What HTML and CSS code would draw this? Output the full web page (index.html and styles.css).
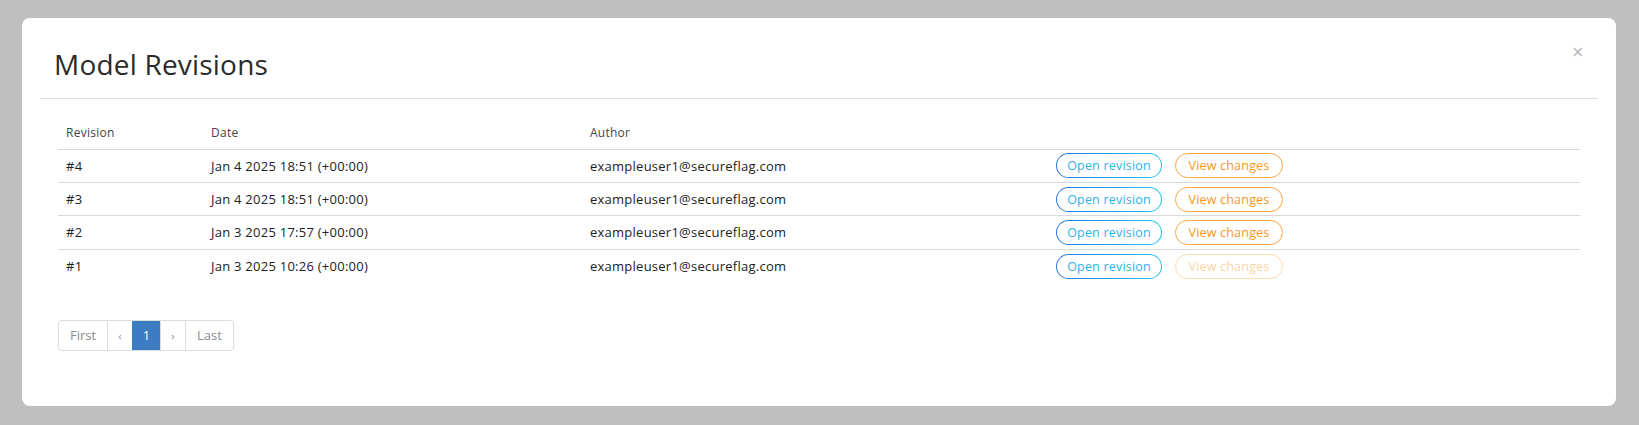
FILE: index.html
```html
<!DOCTYPE html>
<html lang="en">
<head>
<meta charset="utf-8">
<title>Model Revisions</title>
<link rel="stylesheet" href="styles.css">
</head>
<body>
<div class="backdrop">
  <div class="modal">
    <button class="close" aria-label="Close">×</button>
    <div class="modal-header">
      <h2 class="modal-title">Model Revisions</h2>
    </div>
    <div class="modal-body">
      <table class="rev-table">
        <thead>
          <tr>
            <th class="col-rev">Revision</th>
            <th class="col-date">Date</th>
            <th class="col-author">Author</th>
            <th class="col-actions"></th>
          </tr>
        </thead>
        <tbody>
          <tr>
            <td>#4</td>
            <td>Jan 4 2025 18:51 (+00:00)</td>
            <td>exampleuser1@secureflag.com</td>
            <td class="actions"><button class="btn btn-open">Open revision</button><button class="btn btn-changes">View changes</button></td>
          </tr>
          <tr>
            <td>#3</td>
            <td>Jan 4 2025 18:51 (+00:00)</td>
            <td>exampleuser1@secureflag.com</td>
            <td class="actions"><button class="btn btn-open">Open revision</button><button class="btn btn-changes">View changes</button></td>
          </tr>
          <tr>
            <td>#2</td>
            <td>Jan 3 2025 17:57 (+00:00)</td>
            <td>exampleuser1@secureflag.com</td>
            <td class="actions"><button class="btn btn-open">Open revision</button><button class="btn btn-changes">View changes</button></td>
          </tr>
          <tr>
            <td>#1</td>
            <td>Jan 3 2025 10:26 (+00:00)</td>
            <td>exampleuser1@secureflag.com</td>
            <td class="actions"><button class="btn btn-open">Open revision</button><button class="btn btn-changes is-disabled" disabled>View changes</button></td>
          </tr>
        </tbody>
      </table>
      <nav class="pagination">
        <span class="page">First</span>
        <span class="page page-arrow">‹</span>
        <span class="page page-active">1</span>
        <span class="page page-arrow">›</span>
        <span class="page">Last</span>
      </nav>
    </div>
  </div>
</div>
</body>
</html>
```
FILE: styles.css
```css
* { box-sizing: border-box; }
html, body { margin: 0; padding: 0; }
body {
  width: 1639px;
  height: 425px;
  overflow: hidden;
  background: #bfbfbf;
  font-family: "Open Sans", "Liberation Sans", sans-serif;
  color: #222;
}
.backdrop {
  padding: 18px 23px 19px 22px;
  height: 425px;
}
.modal {
  position: relative;
  background: #fff;
  border-radius: 8px;
  height: 388px;
  padding: 0 18px;
}
.close {
  position: absolute;
  top: 24px;
  right: 32px;
  border: 0;
  background: none;
  padding: 0;
  font-family: "DejaVu Sans", sans-serif;
  font-size: 15px;
  line-height: 20px;
  color: #b5b5b5;
}
.modal-header {
  padding: 28px 14px 16px;
  border-bottom: 1px solid #dedede;
}
.modal-title {
  margin: 0;
  font-size: 28px;
  line-height: 36px;
  letter-spacing: 0.2px;
  font-weight: 400;
  color: #2b2b2b;
}
.modal-body {
  padding: 17px 18px 0;
}
.rev-table {
  width: 100%;
  border-collapse: collapse;
  font-size: 13px;
  letter-spacing: 0.25px;
}
.rev-table th {
  text-align: left;
  font-weight: 400;
  font-size: 12px;
  color: #444;
  height: 33px;
  padding: 0 8px;
  border-bottom: 1px solid #d9d9d9;
}
.rev-table td {
  height: 33.4px;
  padding: 0 8px;
  border-top: 1px solid #d9d9d9;
  vertical-align: middle;
}
.rev-table tbody tr:first-child td { border-top: 0; }
.col-rev { width: 145px; }
.col-date { width: 379px; }
.col-author { width: 466px; }
.actions {
  white-space: nowrap;
}
.btn {
  display: inline-flex;
  align-items: center;
  justify-content: center;
  height: 25px;
  padding: 0 9px;
  border-radius: 13px;
  border: 1px solid transparent;
  font-family: inherit;
  font-size: 12.5px;
  letter-spacing: 0.2px;
  background: #fff;
  cursor: pointer;
  vertical-align: middle;
}
.btn-open {
  width: 106px;
  margin-right: 13px;
  color: #2eb3e6;
  background: linear-gradient(#fff, #fff) padding-box,
              linear-gradient(90deg, #2a74dc, #1ec4ec) border-box;
}
.btn-changes {
  width: 108px;
  color: #f7961e;
  border-color: #f9a845;
}
.btn-changes.is-disabled {
  opacity: 0.4;
  cursor: default;
}
.pagination {
  display: inline-flex;
  margin-top: 37px;
  border: 1px solid #dcdcdc;
  border-radius: 4px;
  overflow: hidden;
  height: 31px;
  font-size: 13px;
  color: #8a8a8a;
}
.page {
  display: flex;
  align-items: center;
  justify-content: center;
  border-left: 1px solid #dcdcdc;
  padding: 0 10px;
}
.page:first-child { border-left: 0; width: 48px; }
.page-arrow { width: 25px; font-size: 11px; }
.page-active {
  width: 28px;
  background: #3c7cc2;
  color: #fff;
  border-left-color: #3c7cc2;
}
.page:last-child { width: 48px; }
```
